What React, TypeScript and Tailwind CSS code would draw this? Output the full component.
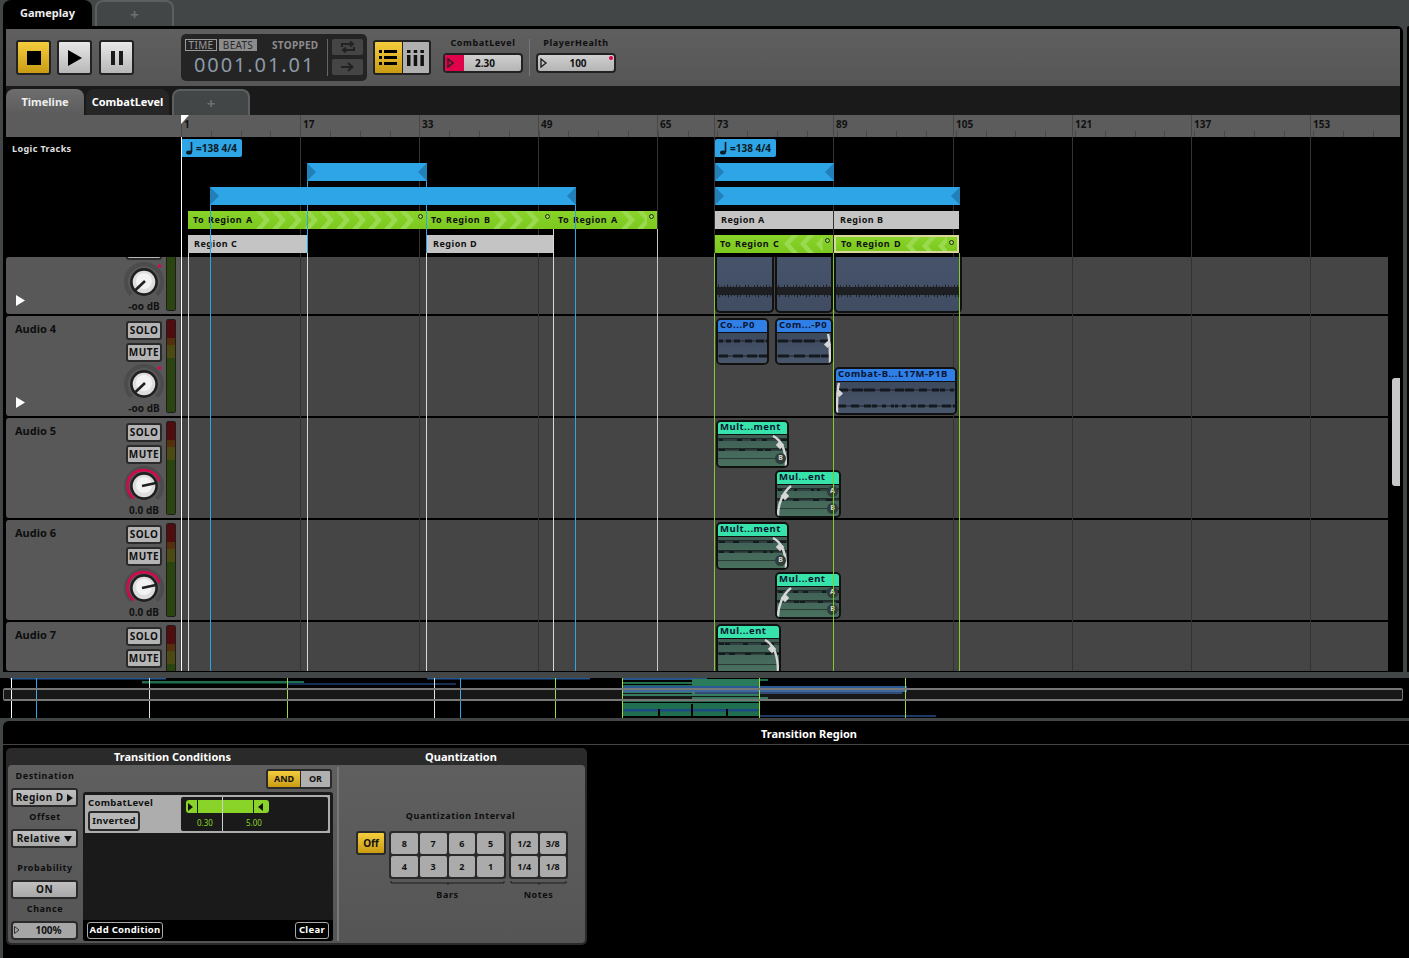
import { ReactNode } from 'react'

const RULER = [
    { x: 181, label: '1' }, { x: 300, label: '17' }, { x: 419, label: '33' }, { x: 538, label: '49' },
    { x: 657, label: '65' }, { x: 714, label: '73' }, { x: 833, label: '89' }, { x: 953, label: '105' },
    { x: 1072, label: '121' }, { x: 1191, label: '137' }, { x: 1310, label: '153' },
]

// timeline children are placed in page coordinates, minus the origin of the canvas
const at = (x: number, y: number, w: number, h: number) => ({ left: x - 6, top: y - 137, width: w, height: h })

const LINES = [
    { x: 181, y1: 137, y2: 671, c: 'bg-white' },
    { x: 188, y1: 253, y2: 671, c: 'bg-[#d8d8d8]' },
    { x: 210, y1: 205, y2: 671, c: 'bg-[#2ea5e6]' },
    { x: 307, y1: 181, y2: 253, c: 'bg-[#2ea5e6]' },
    { x: 307, y1: 253, y2: 671, c: 'bg-[#d8d8d8]' },
    { x: 426, y1: 181, y2: 253, c: 'bg-[#2ea5e6]' },
    { x: 426, y1: 253, y2: 671, c: 'bg-[#d8d8d8]' },
    { x: 553, y1: 229, y2: 671, c: 'bg-[#d8d8d8]' },
    { x: 575, y1: 205, y2: 671, c: 'bg-[#2ea5e6]' },
    { x: 657, y1: 229, y2: 671, c: 'bg-[#c8c8c8]' },
    { x: 714, y1: 253, y2: 671, c: 'bg-[#86c832]' },
    { x: 833, y1: 253, y2: 671, c: 'bg-[#86c832]' },
    { x: 959, y1: 253, y2: 671, c: 'bg-[#86c832]' },
]

function Tab({ label, active, className }: { label: string; active?: boolean; className: string }) {
    return (
        <div className={`flex items-center justify-center rounded-t-lg text-[11px] font-bold ${active ? 'text-[#eeeeee]' : 'text-white'} ${className}`}>
            {label}
        </div>
    )
}

function PlusTab({ className }: { className: string }) {
    return (
        <div className={`flex items-center justify-center rounded-t-lg border-2 border-b-0 border-[#5c5f60] bg-[#434647] text-[15px] font-bold text-[#6c6f70] ${className}`}>
            +
        </div>
    )
}

function TransportButton({ yellow, children }: { yellow?: boolean; children: ReactNode }) {
    return (
        <div className={`flex h-[35px] w-[35px] items-center justify-center rounded-[3px] border-2 border-[#222222] ${yellow ? 'bg-gradient-to-b from-[#f4cd3c] to-[#c99c12]' : 'bg-gradient-to-b from-[#e8e8e8] to-[#b8b8b8]'}`}>
            {children}
        </div>
    )
}

function ValueSlider({ value, fill, dot }: { value: string; fill?: boolean; dot?: boolean }) {
    return (
        <div className="relative flex h-[20px] w-[80px] items-center rounded-[4px] border-2 border-[#222222] bg-gradient-to-b from-[#d0d0d0] to-[#b4b4b4] text-[10px] font-bold text-[#111111]">
            {fill && <div className="absolute left-0 top-0 h-full w-[19px] rounded-l-[2px] bg-[#e0034c]" />}
            <svg width="8" height="10" viewBox="0 0 8 10" className="absolute left-[2px] top-[3px]">
                <path d="M1 1 L6 5 L1 9 Z" fill="none" stroke="#222222" strokeWidth="1.4" />
            </svg>
            {dot && <div className="absolute right-[1px] top-[1px] h-[4px] w-[4px] rounded-full bg-[#e0034c]" />}
            <span className={fill ? 'w-full pl-[4px] text-center' : 'w-full pl-[4px] text-center'}>{value}</span>
        </div>
    )
}

function Knob({ on }: { on?: boolean }) {
    return (
        <svg width="40" height="40" viewBox="-20 -20 40 40" className="-mb-[4px] -mt-[1px] shrink-0">
            <path d="M-12.7 12.7 A18 18 0 1 1 12.7 12.7" fill="none" stroke="#4c4c4c" strokeWidth="4" />
            {on ? <path d="M-10.2 12.5 A16.5 16.5 0 0 1 -14 -9 A17 17 0 0 1 15.5 -5" fill="none" stroke="#d4074d" strokeWidth="2.6" /> : <circle cx="15.5" cy="-16" r="1.8" fill="#e0034c" />}
            <circle r="12.6" fill="#dddddd" stroke="#202020" strokeWidth="2.6" />
            <circle r="8" cy="-1" fill="#f2f2f2" />
            {on ? <path d="M-2 0 L12 -3" stroke="#202020" strokeWidth="2.6" /> : <path d="M1 -1 L-8.5 8" stroke="#202020" strokeWidth="2.6" />}
        </svg>
    )
}

function SmallButton({ label }: { label: string }) {
    return (
        <div className="flex h-[19px] w-[36px] shrink-0 items-center justify-center rounded-[3px] border-2 border-[#2a2a2a] bg-[#b4b4b4] text-[10px] font-bold tracking-[0.5px] text-[#111111]">
            {label}
        </div>
    )
}

function Meter() {
    return (
        <div className="flex h-[94px] w-[10px] flex-col overflow-hidden rounded-[2px] border border-[#1d1d1d]">
            <div className="h-[18px] bg-[#4f0d10]" />
            <div className="h-[7px] bg-[#54300f]" />
            <div className="h-[13px] bg-[#4a4a12]" />
            <div className="flex-1 bg-[#2b4511]" />
        </div>
    )
}

// scrolled: the top of the strip is out of view, cropped: the knob is out of view
function TrackHeader({ name, db, on, play, scrolled, cropped }: { name?: string; db?: string; on?: boolean; play?: boolean; scrolled?: boolean; cropped?: boolean }) {
    return (
        <div className="flex h-[100px] w-[174px] shrink-0 pr-[4px] pt-[3px]">
            <div className="flex flex-1 flex-col justify-between pb-[8px] pl-[9px]">
                <span className="mt-[2px] h-[15px] text-[11px] font-bold leading-[15px] text-[#0e0e0e]">{name}</span>
                {play && (
                    <svg width="9" height="11" viewBox="0 0 9 11" className="ml-[1px]">
                        <path d="M0 0 L9 5.5 L0 11 Z" fill="#ffffff" />
                    </svg>
                )}
            </div>
            <div className="flex w-[36px] flex-col items-center gap-[3px] pt-[2px]">
                <SmallButton label={scrolled ? '' : 'SOLO'} />
                <SmallButton label={scrolled ? '' : 'MUTE'} />
                {!cropped && <Knob on={on} />}
                {!cropped && <span className="whitespace-nowrap text-[10px] font-bold leading-[10px] text-[#111111]">{db}</span>}
            </div>
            <div className="ml-[4px]">
                <Meter />
            </div>
        </div>
    )
}

function TrackRow({ height, bottom, children }: { height: string; bottom?: boolean; children: ReactNode }) {
    return (
        <div className={`flex w-full shrink-0 overflow-hidden ${height}`}>
            <div className={`flex w-[174px] shrink-0 flex-col overflow-hidden rounded-l-[3px] bg-[#585858] ${bottom ? 'justify-end' : ''}`}>{children}</div>
            <div className="flex-1 bg-[#454545]" />
            <div className="w-[12px] bg-black" />
        </div>
    )
}

function Chevrons({ left }: { left?: boolean }) {
    const id = left ? 'chevL' : 'chevR'
    return (
        <svg className="h-full min-w-0 flex-1" height="18">
            <defs>
                <pattern id={id} width="16" height="18" patternUnits="userSpaceOnUse">
                    <path d={left ? 'M10 0 H16 L8 9 L16 18 H10 L2 9 Z' : 'M6 0 H0 L8 9 L0 18 H6 L14 9 Z'} fill="#9ada4e" />
                </pattern>
            </defs>
            <rect width="100%" height="18" fill={`url(#${id})`} />
        </svg>
    )
}

function GreenBar({ x, y, w, label, left, selected }: { x: number; y: number; w: number; label: string; left?: boolean; selected?: boolean }) {
    return (
        <div
            className={`absolute flex items-center overflow-hidden bg-gradient-to-b from-[#8ad42a] to-[#7cc81e] text-[9px] font-bold text-[#111111] ${selected ? 'border-2 border-[#d9d89a]' : ''}`}
            style={at(x, y, w, 18)}
        >
            <span className="whitespace-nowrap pl-[5px] pr-[3px] tracking-[0.5px] [word-spacing:1px]">{label}</span>
            <Chevrons left={left} />
            <div className="w-[10px] shrink-0" />
            <div className="absolute right-[3px] top-[3px] h-[5px] w-[5px] rounded-full border border-[#222222] bg-[#9fdc52]" />
        </div>
    )
}

function GrayRegion({ x, y, w, label }: { x: number; y: number; w: number; label: string }) {
    return (
        <div className="absolute flex items-center bg-[#c4c4c4] pl-[6px] text-[9px] font-bold tracking-[0.5px] text-[#111111]" style={at(x, y, w, 18)}>
            {label}
        </div>
    )
}

function BlueBar({ x, y, w }: { x: number; y: number; w: number }) {
    return (
        <div className="absolute" style={at(x, y, w, 18)}>
            <svg width={w} height="18" className="block">
                <rect width={w} height="18" fill="#2ea5e6" />
                <path d="M0 0 L9 9 L0 18 Z" fill="#2180b8" />
                <path d={`M${w} 0 L${w - 9} 9 L${w} 18 Z`} fill="#2180b8" />
            </svg>
        </div>
    )
}

function TempoFlag({ x }: { x: number }) {
    return (
        <div className="absolute flex items-center gap-[2px] rounded-[2px] rounded-bl-none bg-[#2ea5e6] pl-[4px] text-[10px] font-bold text-[#0c1a22]" style={at(x, 139, 61, 18)}>
            <svg width="9" height="14" viewBox="0 0 9 14">
                <path d="M6.5 1 V11" stroke="#0c1a22" strokeWidth="1.6" />
                <ellipse cx="4" cy="11.5" rx="3" ry="2" fill="#0c1a22" />
            </svg>
            <span className="whitespace-nowrap">=138 4/4</span>
        </div>
    )
}

// fake waveform: a centre line with dark blobs along it
function Wave({ width, y, seed, sparse }: { width: number; y: number; seed: number; sparse?: boolean }) {
    const parts = []
    let x = 1
    let i = seed
    while (x < width) {
        const w = 3 + (Math.abs(Math.sin(i * 12.7)) * (sparse ? 4 : 9) | 0)
        const gap = 1 + (Math.abs(Math.cos(i * 7.3)) * (sparse ? 14 : 5) | 0)
        parts.push(<rect key={i} x={x} y={y - (sparse ? 1 : 1.5)} width={w} height={sparse ? 2 : 3} fill="#14181f" />)
        x += w + gap
        i++
    }
    return (
        <g>
            <rect x="0" y={y - 0.5} width={width} height="1" fill="#1c2028" />
            {parts}
        </g>
    )
}

function Clip({ x, y, w, h, label, mint, fade, letters, seed }: { x: number; y: number; w: number; h: number; label: string; mint?: boolean; fade?: 'in' | 'out'; letters?: string; seed: number }) {
    const bodyW = w - 4
    const bodyH = h - 4 - 13
    return (
        <div className="absolute flex flex-col overflow-hidden rounded-[5px] border-2 border-[#111111]" style={at(x, y, w, h)}>
            <div className={`flex h-[13px] shrink-0 items-center border-b border-[#111111] px-[2px] pb-[1px] text-[9.5px] font-bold tracking-[0.5px] text-[#0a1430] ${mint ? 'bg-[#36e3ab]' : 'bg-[#2f7fe6]'}`}>
                <span className="whitespace-nowrap">{label}</span>
            </div>
            <svg width={bodyW} height={bodyH} className={`block ${mint ? 'bg-gradient-to-b from-[#3f5f55] to-[#49705f]' : 'bg-gradient-to-b from-[#3d495c] to-[#48566c]'}`}>
                {mint ? (
                    <g>
                        <rect y="3" width={bodyW} height="1" fill="#1d2a26" />
                        <rect y="13" width={bodyW} height="1.5" fill="#1d2a26" />
                        <rect y={bodyH - 8} width={bodyW} height="1" fill="#2a3a34" />
                        <Wave width={bodyW} y={5} seed={seed} sparse />
                        <Wave width={bodyW} y={15} seed={seed + 9} sparse />
                    </g>
                ) : (
                    <g>
                        <Wave width={bodyW} y={Math.round(bodyH * 0.25)} seed={seed} />
                        <Wave width={bodyW} y={Math.round(bodyH * 0.78)} seed={seed + 5} />
                    </g>
                )}
                {fade === 'out' && (mint ? (
                    <g>
                        <path d={`M${bodyW - 14} 1 C${bodyW - 4} 6 ${bodyW - 1} 18 ${bodyW - 1} ${bodyH}`} fill="none" stroke="#d6d6d6" strokeWidth="2.4" />
                        <rect x={bodyW - 10} y="7" width="6" height="6" transform={`rotate(45 ${bodyW - 7} 10)`} fill="#d6d6d6" />
                    </g>
                ) : (
                    <g>
                        <path d={`M${bodyW - 3} 1 C${bodyW - 1} 8 ${bodyW - 1} 18 ${bodyW - 1} ${bodyH}`} fill="none" stroke="#d6d6d6" strokeWidth="2.4" />
                        <rect x={bodyW - 6} y="9" width="5" height="5" transform={`rotate(45 ${bodyW - 3.5} 11.5)`} fill="#d6d6d6" />
                    </g>
                ))}
                {fade === 'in' && (mint ? (
                    <g>
                        <path d={`M1 ${bodyH} C1 20 5 8 14 1`} fill="none" stroke="#d6d6d6" strokeWidth="2.4" />
                        <rect x="5" y="8" width="6" height="6" transform="rotate(45 8 11)" fill="#d6d6d6" />
                    </g>
                ) : (
                    <g>
                        <path d={`M1 ${bodyH} C1 18 1 8 3 1`} fill="none" stroke="#d6d6d6" strokeWidth="2.4" />
                        <rect x="1" y="9" width="5" height="5" transform="rotate(45 3.5 11.5)" fill="#d6d6d6" />
                    </g>
                ))}
            </svg>
            {letters && (
                <div className="absolute bottom-[2px] right-[1px] flex flex-col items-center gap-[6px] text-[7px] font-bold text-[#d8d8d8]">
                    {letters.split('').map((l) => (
                        <span key={l} className="flex h-[11px] w-[11px] items-center justify-center rounded-full bg-[#2e3d37]">{l}</span>
                    ))}
                </div>
            )}
        </div>
    )
}

function AudioBlock({ x, w }: { x: number; w: number }) {
    const spikes = Array.from({ length: Math.floor(w / 3) }, (_, i) => ({
        x: i * 3 + 1,
        h: Math.abs(Math.sin(i * 4.1 + x)) * 2.4,
    }))
    return (
        <div className="absolute overflow-hidden rounded-b-[5px] border-2 border-t-0 border-[#111111] bg-gradient-to-b from-[#46536a] to-[#3f4c62]" style={at(x, 257, w, 56)}>
            <svg width={w - 4} height="54" className="block">
                <rect y="30" width={w - 4} height="8" fill="#1e1f22" />
                {spikes.map((s) => (
                    <g key={s.x} fill="#1e1f22">
                        <rect x={s.x} y={30 - s.h} width="1" height={s.h} />
                        <rect x={s.x + 1} y="38" width="1" height={s.h} />
                    </g>
                ))}
            </svg>
        </div>
    )
}

function Overview() {
    const greens = [679, 682, 685, 688, 691, 694, 697, 700]
    return (
        <svg width="1409" height="40" className="block" viewBox="0 678 1409 40">
            <rect x="0" y="678" width="1409" height="40" fill="#000000" />
            <rect x="10" y="678" width="156" height="1.5" fill="#27568e" />
            <rect x="142" y="681" width="162" height="2.5" fill="#1f6e50" />
            <rect x="288" y="683" width="168" height="2" fill="#172f52" />
            <rect x="427" y="678" width="163" height="1.5" fill="#27568e" />
            <rect x="622" y="678" width="85" height="2" fill="#27568e" />
            {greens.map((y, i) => (
                <rect key={y} x={i % 3 === 0 ? 692 : 622} y={y} width={i % 3 === 0 ? 76 : 138} height="2" fill="#1f6e50" />
            ))}
            <rect x="692" y="679" width="68" height="15" fill="#2a7a5c" />
            <rect x="622" y="686" width="285" height="6" fill="#2a5a96" />
            <rect x="695" y="692" width="207" height="2" fill="#1e3864" />
            <rect x="622" y="703" width="138" height="13" fill="#1f6e50" />
            <rect x="622" y="709" width="138" height="2.5" fill="#1d4a80" />
            <rect x="658" y="709" width="2" height="8" fill="#000000" />
            <rect x="691" y="704" width="2" height="13" fill="#000000" />
            <rect x="726" y="709" width="2" height="8" fill="#000000" />
            <rect x="759" y="715" width="177" height="2" fill="#1e3864" />
            {[
                { x: 11, c: '#ffffff' }, { x: 36, c: '#2ea5e6' }, { x: 149, c: '#e0e0e0' }, { x: 287, c: '#9ed83c' },
                { x: 434, c: '#e0e0e0' }, { x: 460, c: '#2ea5e6' }, { x: 555, c: '#9ed83c' }, { x: 622, c: '#9ed83c' },
                { x: 759, c: '#9ed83c' }, { x: 905, c: '#9ed83c' },
            ].map((l) => (
                <rect key={l.x} x={l.x} y="678" width="1" height="40" fill={l.c} />
            ))}
        </svg>
    )
}

function PanelButton({ children, className }: { children: ReactNode; className: string }) {
    return (
        <div className={`flex items-center justify-center rounded-[3px] border-2 border-[#2a2a2a] bg-gradient-to-b from-[#c0c0c0] to-[#a8a8a8] text-[10px] font-bold tracking-[0.4px] text-[#111111] ${className}`}>
            {children}
        </div>
    )
}

function Label({ children, className }: { children: ReactNode; className?: string }) {
    return <div className={`flex h-[14px] items-center justify-center text-[9px] font-bold tracking-[0.6px] text-[#0e0e0e] ${className ?? ''}`}>{children}</div>
}

function KeyGrid({ keys, cols }: { keys: string[]; cols: string }) {
    return (
        <div className={`grid gap-[2px] rounded-[3px] bg-[#2a2a2a] p-[2px] ${cols}`}>
            {keys.map((k) => (
                <div key={k} className="flex h-[21px] items-center justify-center rounded-[2px] bg-[#ababab] text-[9px] font-bold text-[#111111]">{k}</div>
            ))}
        </div>
    )
}

export default function App() {
    return (
        <div className="h-[958px] w-[1409px] overflow-hidden bg-[#434647] font-['Noto_Sans',sans-serif]">
            {/* top tabs */}
            <div className="flex h-[26px] gap-[3px] pl-[3px]">
                <Tab label="Gameplay" active className="w-[89px] bg-black" />
                <PlusTab className="w-[79px]" />
            </div>

            <div className="flex">
                {/* main panel */}
                <div className="ml-[3px] w-[1400px] rounded-tr-[6px] border-[3px] border-b border-black bg-black">
                    {/* transport */}
                    <div className="flex h-[57px] items-center bg-gradient-to-b from-[#5f5f5f] to-[#565656] pl-[10px]">
                        <TransportButton yellow><div className="h-[14px] w-[14px] bg-black" /></TransportButton>
                        <div className="w-[6px]" />
                        <TransportButton>
                            <svg width="14" height="16" viewBox="0 0 14 16"><path d="M0 0 L14 8 L0 16 Z" fill="#000000" /></svg>
                        </TransportButton>
                        <div className="w-[7px]" />
                        <TransportButton>
                            <svg width="12" height="14" viewBox="0 0 12 14"><rect width="4" height="14" fill="#1a1a1a" /><rect x="8" width="4" height="14" fill="#1a1a1a" /></svg>
                        </TransportButton>

                        <div className="ml-[47px] flex h-[47px] w-[186px] rounded-[5px] bg-[#242424]">
                            <div className="w-[146px] pl-[4px] pt-[5px]">
                                <div className="flex items-center text-[10px] leading-[10px] text-[#9a9a9a]">
                                    <span className="w-[32px] border border-[#9a9a9a] text-center tracking-[0.3px]">TIME</span>
                                    <span className="ml-[2px] w-[38px] bg-[#8c8c8c] py-[1px] text-center tracking-[0.3px] text-[#2a2a2a]">BEATS</span>
                                    <span className="ml-[15px] whitespace-nowrap font-bold tracking-[0.3px] text-[#8c8c8c]">STOPPED</span>
                                </div>
                                <div className="pl-[9px] pt-[1px] text-[20px] leading-[26px] tracking-[1.9px] text-[#8d9aa8]">0001.01.01</div>
                            </div>
                            <div className="my-[5px] w-px bg-[#666666]" />
                            <div className="flex flex-col gap-[4px] pl-[4px] pt-[5px]">
                                <div className="flex h-[16px] w-[31px] items-center justify-center rounded-[2px] bg-[#454545]">
                                    <svg width="14" height="12" viewBox="0 0 14 12" fill="none" stroke="#222222" strokeWidth="2">
                                        <path d="M1 6 V3 H11 M9 0.5 L12 3 L9 5.5 M13 6 V9 H3 M5 6.5 L2 9 L5 11.5" />
                                    </svg>
                                </div>
                                <div className="flex h-[16px] w-[31px] items-center justify-center rounded-[2px] bg-[#454545]">
                                    <svg width="13" height="10" viewBox="0 0 13 10" fill="none" stroke="#222222" strokeWidth="2">
                                        <path d="M0 5 H11 M7 1 L11.5 5 L7 9" />
                                    </svg>
                                </div>
                            </div>
                        </div>

                        <div className="ml-[6px] flex h-[35px] w-[58px] overflow-hidden rounded-[3px] border-2 border-[#222222]">
                            <div className="flex flex-1 items-center justify-center bg-gradient-to-b from-[#f4cd3c] to-[#c99c12]">
                                <svg width="18" height="15" viewBox="0 0 18 15" fill="#000000">
                                    <rect width="3" height="3" /><rect x="5" width="13" height="3" />
                                    <rect y="6" width="3" height="3" /><rect x="5" y="6" width="13" height="3" />
                                    <rect y="12" width="3" height="3" /><rect x="5" y="12" width="13" height="3" />
                                </svg>
                            </div>
                            <div className="w-px bg-[#222222]" />
                            <div className="flex flex-1 items-center justify-center bg-[#b0b0b0]">
                                <svg width="17" height="16" viewBox="0 0 17 16" fill="#111111">
                                    <rect width="3.5" height="3" /><rect x="6.7" width="3.5" height="3" /><rect x="13.4" width="3.5" height="3" />
                                    <rect y="5" width="3.5" height="11" /><rect x="6.7" y="5" width="3.5" height="11" /><rect x="13.4" y="5" width="3.5" height="11" />
                                </svg>
                            </div>
                        </div>

                        <div className="mb-[6px] ml-[12px] flex flex-col items-center gap-[3px]">
                            <span className="text-[9px] font-bold leading-[14px] tracking-[0.6px] text-[#0e0e0e]">CombatLevel</span>
                            <ValueSlider value="2.30" fill />
                        </div>
                        <div className="mx-[6px] h-[37px] w-px bg-[#777777]" />
                        <div className="mb-[6px] flex flex-col items-center gap-[3px]">
                            <span className="text-[9px] font-bold leading-[14px] tracking-[0.6px] text-[#0e0e0e]">PlayerHealth</span>
                            <ValueSlider value="100" dot />
                        </div>
                    </div>

                    {/* sub tabs */}
                    <div className="flex h-[29px] items-end gap-[2px] bg-[#1a1a1a]">
                        <Tab label="Timeline" active className="h-[26px] w-[78px] bg-gradient-to-b from-[#6e6e6e] to-[#5b5b5b]" />
                        <Tab label="CombatLevel" className="h-[26px] w-[83px] bg-[#262626]" />
                        <PlusTab className="ml-px h-[26px] w-[78px] border-[#4c4c4c] bg-[#2c2c2c]" />
                    </div>

                    {/* ruler */}
                    <div className="relative h-[22px] overflow-hidden bg-[#5c5c5c]">
                        {RULER.map((r) => (
                            <div key={r.label} className="absolute top-0 h-full w-px bg-[#474747]" style={{ left: r.x - 6 }}>
                                <span className="absolute left-[3px] top-[3px] text-[10px] font-bold leading-[13px] text-[#111111]">{r.label}</span>
                            </div>
                        ))}
                        {Array.from({ length: 41 }, (_, i) => 181 + i * 29.8).map((x) => (
                            <div key={x} className="absolute bottom-0 h-[6px] w-px bg-[#474747]" style={{ left: x - 6 }} />
                        ))}
                        <svg width="10" height="10" className="absolute left-[175px] top-0">
                            <path d="M0 0 H8 L0 9 Z" fill="#ffffff" />
                        </svg>
                    </div>

                    {/* tracks */}
                    <div className="relative flex h-[534px] flex-col gap-[2px] overflow-hidden bg-black">
                        <div className="flex h-[118px] shrink-0 items-start pl-[6px] pt-[5px] text-[9px] font-bold leading-[14px] tracking-[0.4px] text-[#e0e0e0]">Logic Tracks</div>
                        <TrackRow height="h-[57px]" bottom>
                            <TrackHeader db="-oo dB" play scrolled />
                        </TrackRow>
                        <TrackRow height="h-[100px]">
                            <TrackHeader name="Audio 4" db="-oo dB" play />
                        </TrackRow>
                        <TrackRow height="h-[100px]">
                            <TrackHeader name="Audio 5" db="0.0 dB" on />
                        </TrackRow>
                        <TrackRow height="h-[100px]">
                            <TrackHeader name="Audio 6" db="0.0 dB" on />
                        </TrackRow>
                        <TrackRow height="h-[49px]">
                            <TrackHeader name="Audio 7" cropped />
                        </TrackRow>

                        {/* scrollbar thumb */}
                        <div className="absolute left-[1386px] top-[241px] h-[108px] w-[8px] rounded-l-[3px] bg-[#c8c8c8]" />

                        {/* grid */}
                        {RULER.map((r) => (
                            <div key={r.label} className="absolute w-px bg-[#333333]" style={at(r.x, 137, 1, 534)} />
                        ))}

                        <TempoFlag x={181} />
                        <TempoFlag x={715} />
                        <BlueBar x={307} y={163} w={120} />
                        <BlueBar x={210} y={187} w={366} />
                        <BlueBar x={715} y={163} w={119} />
                        <BlueBar x={715} y={187} w={245} />

                        <GreenBar x={188} y={211} w={238} label="To Region A" />
                        <GreenBar x={426} y={211} w={127} label="To Region B" />
                        <GreenBar x={553} y={211} w={104} label="To Region A" />
                        <GrayRegion x={188} y={235} w={119} label="Region C" />
                        <GrayRegion x={427} y={235} w={126} label="Region D" />
                        <GrayRegion x={715} y={211} w={118} label="Region A" />
                        <GrayRegion x={834} y={211} w={125} label="Region B" />
                        <GreenBar x={715} y={235} w={118} label="To Region C" left />
                        <GreenBar x={834} y={235} w={125} label="To Region D" left selected />

                        <AudioBlock x={715} w={59} />
                        <AudioBlock x={775} w={58} />
                        <AudioBlock x={834} w={128} />

                        <Clip x={716} y={318} w={53} h={47} label="Co...P0" seed={1} />
                        <Clip x={775} y={318} w={58} h={47} label="Com...-P0" seed={7} fade="out" />
                        <Clip x={834} y={367} w={123} h={48} label="Combat-B...L17M-P1B" seed={13} fade="in" />
                        <Clip x={716} y={420} w={73} h={48} label="Mult...ment" mint seed={3} fade="out" letters="B" />
                        <Clip x={775} y={470} w={66} h={48} label="Mul...ent" mint seed={21} fade="in" letters="AB" />
                        <Clip x={716} y={522} w={73} h={48} label="Mult...ment" mint seed={33} fade="out" letters="B" />
                        <Clip x={775} y={572} w={66} h={47} label="Mul...ent" mint seed={41} fade="in" letters="AB" />
                        <Clip x={716} y={624} w={65} h={50} label="Mul...ent" mint seed={51} fade="out" />

                        {LINES.map((l) => (
                            <div key={`${l.x}-${l.y1}`} className={`absolute ${l.c}`} style={at(l.x, l.y1, 1, l.y2 - l.y1)} />
                        ))}
                    </div>
                </div>
                <div className="ml-[4px] w-[2px] rounded-tl-[3px] bg-black" />
            </div>

            {/* overview */}
            <div className="relative mt-[6px] h-[40px]">
                <Overview />
                <div className="absolute left-[3px] top-[10px] h-[13px] w-[1400px] rounded-[2px] border-x border-y-2 border-[#777777] bg-[#ffffff18]" />
            </div>

            {/* bottom panel */}
            <div className="ml-[3px] mt-[3px] flex h-[237px] flex-col rounded-tl-[6px] bg-black">
                <div className="flex h-[24px] shrink-0 items-center justify-center border-b border-[#444444] pl-[206px] pt-[4px] text-[11px] font-bold text-white">Transition Region</div>
                <div className="ml-[3px] mt-[3px] flex h-[197px] w-[581px] flex-col rounded-[5px] bg-[#2a2a2a] px-[2px] pb-[2px]">
                    <div className="flex h-[17px] shrink-0 pt-[1px] text-[11px] font-bold leading-[16px] text-white">
                        <div className="w-[329px] text-center">Transition Conditions</div>
                        <div className="flex-1 text-center">Quantization</div>
                    </div>
                    <div className="flex flex-1 rounded-[4px] bg-gradient-to-b from-[#5f5f5f] to-[#555555]">
                        <div className="flex w-[329px] pl-[3px]">
                            {/* destination column */}
                            <div className="flex w-[68px] flex-col pt-[4px]">
                                <Label>Destination</Label>
                                <PanelButton className="mt-[5px] h-[19px] w-[67px] gap-[4px]">
                                    Region D
                                    <svg width="6" height="8" viewBox="0 0 6 8"><path d="M0 0 L6 4 L0 8 Z" fill="#111111" /></svg>
                                </PanelButton>
                                <Label className="mt-[3px]">Offset</Label>
                                <PanelButton className="mt-[5px] h-[19px] w-[67px] gap-[4px]">
                                    Relative
                                    <svg width="8" height="6" viewBox="0 0 8 6"><path d="M0 0 H8 L4 6 Z" fill="#111111" /></svg>
                                </PanelButton>
                                <Label className="mt-[13px]">Probability</Label>
                                <PanelButton className="mt-[5px] h-[19px] w-[67px]">ON</PanelButton>
                                <Label className="mt-[3px]">Chance</Label>
                                <div className="relative mt-[5px] flex h-[19px] w-[67px] items-center justify-center rounded-[4px] border-2 border-[#2a2a2a] bg-[#a6a6a6] pl-[8px] text-[10px] font-bold text-[#111111]">
                                    <svg width="6" height="8" viewBox="0 0 6 8" className="absolute left-[1px] top-[3px]"><path d="M0.5 0.5 L5 4 L0.5 7.5 Z" fill="none" stroke="#333333" /></svg>
                                    100%
                                </div>
                            </div>

                            {/* conditions column */}
                            <div className="ml-[4px] flex w-[250px] flex-col pt-[4px]">
                                <div className="flex h-[20px] justify-end pr-[1px]">
                                    <div className="flex h-[20px] w-[66px] overflow-hidden rounded-[3px] border-2 border-[#2a2a2a] text-[9px] font-bold text-[#111111]">
                                        <div className="flex w-[32px] items-center justify-center bg-gradient-to-b from-[#f4cd3c] to-[#c99c12]">AND</div>
                                        <div className="w-px bg-[#2a2a2a]" />
                                        <div className="flex flex-1 items-center justify-center bg-[#b0b0b0]">OR</div>
                                    </div>
                                </div>
                                <div className="mt-[3px] flex h-[149px] flex-col rounded-[3px] bg-[#1a1a1a]">
                                    <div className="ml-[2px] mr-[3px] mt-[3px] flex h-[38px] bg-[#adadad] pl-[3px]">
                                        <div className="flex w-[93px] flex-col gap-[1px] pt-[1px] text-[9.5px] font-bold tracking-[0.3px] text-[#111111]">
                                            <span className="leading-[14px]">CombatLevel</span>
                                            <span className="flex h-[20px] w-[52px] items-center justify-center rounded-[3px] border-2 border-[#2a2a2a] bg-[#b8b8b8]">Inverted</span>
                                        </div>
                                        <div className="relative my-[2px] mr-[2px] flex-1 rounded-[2px] bg-[#1a1a1a]">
                                            <div className="absolute left-[5px] top-[3px] flex h-[13px] w-[83px] items-center justify-between rounded-[3px] bg-[#8ad42a] px-[2px]">
                                                <span className="flex h-full items-center border-r border-[#1a1a1a] pr-[4px]">
                                                    <svg width="5" height="8" viewBox="0 0 5 8"><path d="M0 0 L5 4 L0 8 Z" fill="#111111" /></svg>
                                                </span>
                                                <span className="flex h-full items-center border-l border-[#1a1a1a] pl-[4px] pr-[4px]">
                                                    <svg width="5" height="8" viewBox="0 0 5 8"><path d="M5 0 L0 4 L5 8 Z" fill="#111111" /></svg>
                                                </span>
                                            </div>
                                            <div className="absolute left-[41px] top-0 h-full w-px bg-[#d0d0d0]" />
                                            <span className="absolute left-[16px] top-[20px] text-[8px] leading-[11px] text-[#8ad42a]">0.30</span>
                                            <span className="absolute left-[65px] top-[20px] text-[8px] leading-[11px] text-[#8ad42a]">5.00</span>
                                        </div>
                                    </div>
                                    <div className="flex-1" />
                                    <div className="flex h-[21px] items-center justify-between rounded-b-[3px] bg-black pl-[4px] pr-[4px] text-[9.5px] font-bold tracking-[0.3px] text-white">
                                        <span className="flex h-[17px] w-[76px] items-center justify-center rounded-[3px] border border-[#aaaaaa]">Add Condition</span>
                                        <span className="flex h-[17px] w-[34px] items-center justify-center rounded-[3px] border border-[#aaaaaa]">Clear</span>
                                    </div>
                                </div>
                            </div>
                        </div>

                        <div className="my-[2px] w-[2px] bg-[#777777]" />

                        {/* quantization */}
                        <div className="flex flex-1 flex-col items-center pt-[44px]">
                            <Label className="-ml-[3px]">Quantization Interval</Label>
                            <div className="mt-[8px] flex items-start gap-[2px]">
                                <div className="flex h-[24px] w-[30px] items-center justify-center rounded-[3px] border-2 border-[#2a2a2a] bg-gradient-to-b from-[#f4cd3c] to-[#c99c12] text-[10px] font-bold text-[#111111]">Off</div>
                                <div className="ml-[1px] flex flex-col items-center">
                                    <KeyGrid cols="w-[117px] grid-cols-4" keys={['8', '7', '6', '5', '4', '3', '2', '1']} />
                                    <svg width="115" height="5" viewBox="0 0 115 5" className="mt-[2px]"><path d="M1 0 V2 H114 V0 M58 2 V4" fill="none" stroke="#1c1c1c" /></svg>
                                    <Label className="mt-[2px]">Bars</Label>
                                </div>
                                <div className="ml-[1px] flex flex-col items-center">
                                    <KeyGrid cols="w-[59px] grid-cols-2" keys={['1/2', '3/8', '1/4', '1/8']} />
                                    <svg width="57" height="5" viewBox="0 0 57 5" className="mt-[2px]"><path d="M1 0 V2 H56 V0 M29 2 V4" fill="none" stroke="#1c1c1c" /></svg>
                                    <Label className="mt-[2px]">Notes</Label>
                                </div>
                            </div>
                        </div>
                    </div>
                </div>
            </div>
        </div>
    )
}
